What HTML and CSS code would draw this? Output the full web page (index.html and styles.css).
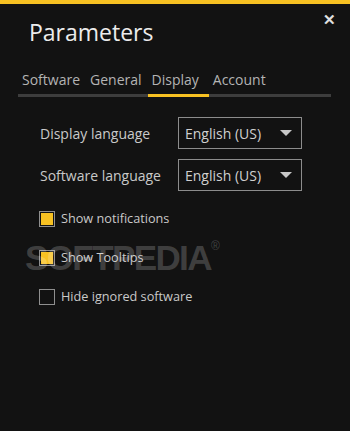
FILE: index.html
```html
<!DOCTYPE html>
<html lang="en">
<head>
    <meta charset="UTF-8">
    <meta name="viewport" content="width=device-width, initial-scale=1.0">
    <title>Parameters</title>
    <link rel="stylesheet" href="styles.css">
</head>
<body>
    <div class="window">
        <div class="accent"></div>

        <div class="header">
            <h1>Parameters</h1>
            <span class="close">&#x2715;</span>
        </div>

        <div class="tabs">
            <span class="tab">Software</span>
            <span class="tab">General</span>
            <span class="tab active">Display</span>
            <span class="tab">Account</span>
        </div>

        <div class="options">
            <div class="row">
                <span class="label">Display language</span>
                <div class="select">
                    <span>English (US)</span>
                    <span class="arrow"></span>
                </div>
            </div>
            <div class="row">
                <span class="label">Software language</span>
                <div class="select">
                    <span>English (US)</span>
                    <span class="arrow"></span>
                </div>
            </div>

            <div class="checks">
                <label class="check"><span class="box checked"></span>Show notifications</label>
                <label class="check"><span class="box checked"></span>Show Tooltips</label>
                <label class="check"><span class="box"></span>Hide ignored software</label>
            </div>
        </div>

        <div class="watermark">SOFTPEDIA<sup>&reg;</sup></div>
    </div>
</body>
</html>
```

FILE: styles.css
```css
body {
    margin: 0;
    background: #121212;
    font-family: "Open Sans", "Noto Sans", sans-serif;
    color: #c9c9c9;
}

.window {
    position: relative;
    height: 431px;
    overflow: hidden;
}

.accent {
    height: 4px;
    background: #f7c122;
}

.header {
    display: flex;
    justify-content: space-between;
    align-items: flex-start;
    padding: 0 14px 0 29px;
}

.header h1 {
    margin: 12px 0 0;
    font-weight: 400;
    font-size: 23px;
    line-height: 32px;
    color: #ececec;
}

.close {
    margin-top: 5px;
    font-size: 15px;
    font-weight: bold;
    color: #e0e0e0;
}

.tabs {
    display: flex;
    margin: 22px 19px 0 18px;
    border-bottom: 3px solid #3d3d3d;
}

.tab {
    padding: 0 6px 4px 4px;
    margin-bottom: -3px;
    border-bottom: 3px solid transparent;
    font-size: 14px;
    line-height: 20px;
    color: #b4b4b4;
}

.tab.active {
    border-bottom-color: #f7c122;
    padding-right: 10px;
}

.options {
    padding: 20px 0 0 40px;
}

.row {
    display: flex;
    align-items: center;
    margin-bottom: 10px;
}

.label {
    width: 138px;
    font-size: 14px;
}

.select {
    display: flex;
    justify-content: space-between;
    align-items: center;
    padding: 0 9px 0 6px;
    box-sizing: border-box;
    width: 124px;
    height: 32px;
    border: 1px solid #8c8c8c;
    font-size: 14px;
    color: #d0d0d0;
}

.arrow {
    width: 0;
    height: 0;
    border-left: 6px solid transparent;
    border-right: 6px solid transparent;
    border-top: 6px solid #c8c8c8;
}

.checks {
    display: flex;
    flex-direction: column;
    gap: 20px;
    margin: 18px 0 0 -1px;
}

.check {
    display: flex;
    align-items: center;
    gap: 6px;
    font-size: 12.7px;
    line-height: 19px;
}

.box {
    width: 12px;
    height: 12px;
    border: 1px solid #8f8f8f;
    padding: 1px;
    background-clip: content-box;
}

.box.checked {
    background-color: #f7c122;
}

.watermark {
    position: absolute;
    left: 25px;
    top: 238px;
    font-family: "Liberation Sans", Arial, sans-serif;
    font-size: 35px;
    font-weight: bold;
    letter-spacing: -1.6px;
    color: rgba(255, 255, 255, 0.2);
    pointer-events: none;
}

.watermark sup {
    font-size: 12px;
    font-weight: normal;
    vertical-align: 20px;
}
```
